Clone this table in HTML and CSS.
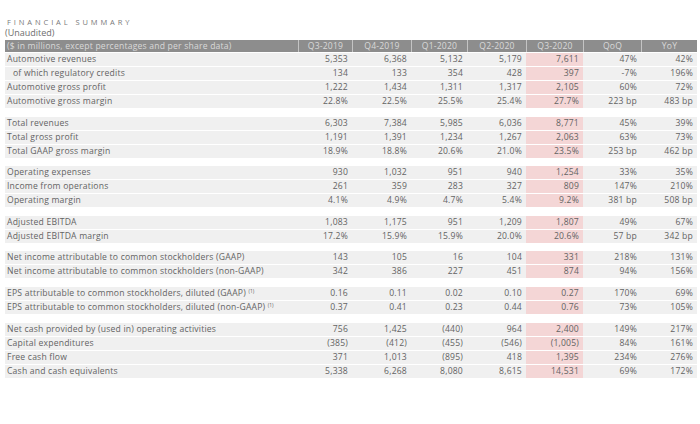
FILE: index.html
```html
<!DOCTYPE html>
<html>
<head>
<meta charset="utf-8">
<link rel="stylesheet" href="styles.css">
</head>
<body>
<div class="page">
  <div class="title">FINANCIAL SUMMARY</div>
  <div class="subtitle">(Unaudited)</div>
  <div class="table">
    <div class="row head">
      <div class="c lab">($ in millions, except percentages and per share data)</div>
      <div class="c">Q3-2019</div><div class="c">Q4-2019</div><div class="c">Q1-2020</div><div class="c">Q2-2020</div><div class="c">Q3-2020</div><div class="c">QoQ</div><div class="c">YoY</div>
    </div>
    <div class="group first">
      <div class="row"><div class="c lab">Automotive revenues</div><div class="c">5,353</div><div class="c">6,368</div><div class="c">5,132</div><div class="c">5,179</div><div class="c hl">7,611</div><div class="c">47%</div><div class="c">42%</div></div>
      <div class="row"><div class="c lab ind">of which regulatory credits</div><div class="c">134</div><div class="c">133</div><div class="c">354</div><div class="c">428</div><div class="c hl">397</div><div class="c">-7%</div><div class="c">196%</div></div>
      <div class="row"><div class="c lab">Automotive gross profit</div><div class="c">1,222</div><div class="c">1,434</div><div class="c">1,311</div><div class="c">1,317</div><div class="c hl">2,105</div><div class="c">60%</div><div class="c">72%</div></div>
      <div class="row"><div class="c lab">Automotive gross margin</div><div class="c">22.8%</div><div class="c">22.5%</div><div class="c">25.5%</div><div class="c">25.4%</div><div class="c hl">27.7%</div><div class="c">223 bp</div><div class="c">483 bp</div></div>
    </div>
    <div class="group">
      <div class="row"><div class="c lab">Total revenues</div><div class="c">6,303</div><div class="c">7,384</div><div class="c">5,985</div><div class="c">6,036</div><div class="c hl">8,771</div><div class="c">45%</div><div class="c">39%</div></div>
      <div class="row"><div class="c lab">Total gross profit</div><div class="c">1,191</div><div class="c">1,391</div><div class="c">1,234</div><div class="c">1,267</div><div class="c hl">2,063</div><div class="c">63%</div><div class="c">73%</div></div>
      <div class="row"><div class="c lab">Total GAAP gross margin</div><div class="c">18.9%</div><div class="c">18.8%</div><div class="c">20.6%</div><div class="c">21.0%</div><div class="c hl">23.5%</div><div class="c">253 bp</div><div class="c">462 bp</div></div>
    </div>
    <div class="group tight">
      <div class="row"><div class="c lab">Operating expenses</div><div class="c">930</div><div class="c">1,032</div><div class="c">951</div><div class="c">940</div><div class="c hl">1,254</div><div class="c">33%</div><div class="c">35%</div></div>
      <div class="row"><div class="c lab">Income from operations</div><div class="c">261</div><div class="c">359</div><div class="c">283</div><div class="c">327</div><div class="c hl">809</div><div class="c">147%</div><div class="c">210%</div></div>
      <div class="row"><div class="c lab">Operating margin</div><div class="c">4.1%</div><div class="c">4.9%</div><div class="c">4.7%</div><div class="c">5.4%</div><div class="c hl">9.2%</div><div class="c">381 bp</div><div class="c">508 bp</div></div>
    </div>
    <div class="group">
      <div class="row"><div class="c lab">Adjusted EBITDA</div><div class="c">1,083</div><div class="c">1,175</div><div class="c">951</div><div class="c">1,209</div><div class="c hl">1,807</div><div class="c">49%</div><div class="c">67%</div></div>
      <div class="row"><div class="c lab">Adjusted EBITDA margin</div><div class="c">17.2%</div><div class="c">15.9%</div><div class="c">15.9%</div><div class="c">20.0%</div><div class="c hl">20.6%</div><div class="c">57 bp</div><div class="c">342 bp</div></div>
    </div>
    <div class="group tight">
      <div class="row"><div class="c lab">Net income attributable to common stockholders (GAAP)</div><div class="c">143</div><div class="c">105</div><div class="c">16</div><div class="c">104</div><div class="c hl">331</div><div class="c">218%</div><div class="c">131%</div></div>
      <div class="row"><div class="c lab">Net income attributable to common stockholders (non-GAAP)</div><div class="c">342</div><div class="c">386</div><div class="c">227</div><div class="c">451</div><div class="c hl">874</div><div class="c">94%</div><div class="c">156%</div></div>
    </div>
    <div class="group">
      <div class="row"><div class="c lab">EPS attributable to common stockholders, diluted (GAAP) <sup>(1)</sup></div><div class="c">0.16</div><div class="c">0.11</div><div class="c">0.02</div><div class="c">0.10</div><div class="c hl">0.27</div><div class="c">170%</div><div class="c">69%</div></div>
      <div class="row"><div class="c lab">EPS attributable to common stockholders, diluted (non-GAAP) <sup>(1)</sup></div><div class="c">0.37</div><div class="c">0.41</div><div class="c">0.23</div><div class="c">0.44</div><div class="c hl">0.76</div><div class="c">73%</div><div class="c">105%</div></div>
    </div>
    <div class="group">
      <div class="row"><div class="c lab">Net cash provided by (used in) operating activities</div><div class="c">756</div><div class="c">1,425</div><div class="c">(440)</div><div class="c">964</div><div class="c hl">2,400</div><div class="c">149%</div><div class="c">217%</div></div>
      <div class="row"><div class="c lab">Capital expenditures</div><div class="c">(385)</div><div class="c">(412)</div><div class="c">(455)</div><div class="c">(546)</div><div class="c hl">(1,005)</div><div class="c">84%</div><div class="c">161%</div></div>
      <div class="row"><div class="c lab">Free cash flow</div><div class="c">371</div><div class="c">1,013</div><div class="c">(895)</div><div class="c">418</div><div class="c hl">1,395</div><div class="c">234%</div><div class="c">276%</div></div>
      <div class="row"><div class="c lab">Cash and cash equivalents</div><div class="c">5,338</div><div class="c">6,268</div><div class="c">8,080</div><div class="c">8,615</div><div class="c hl">14,531</div><div class="c">69%</div><div class="c">172%</div></div>
    </div>
  </div>
</div>
</body>
</html>
```
FILE: styles.css
```css
html, body {
  margin: 0;
  padding: 0;
  background: #ffffff;
}
.page {
  padding: 17px 3px 0 5px;
  font-family: "Open Sans", "Liberation Sans", sans-serif;
  color: #636363;
}
.title {
  font-size: 7.5px;
  letter-spacing: 2.9px;
  line-height: 10px;
  color: #7a7a7a;
  padding-left: 2px;
}
.subtitle {
  font-size: 9px;
  line-height: 12px;
  color: #6e6e6e;
  margin-bottom: 1px;
}
.table {
  width: 692px;
}
.row {
  display: grid;
  grid-template-columns: 293px 54px 59px 56px 59px 57px 58px 56px;
  height: 13px;
  border-bottom: 1px solid #ffffff;
  background: #f0f0f0;
  font-size: 8.6px;
  letter-spacing: 0.2px;
  line-height: 13px;
}
.c {
  text-align: right;
  padding-right: 4px;
  white-space: nowrap;
}
.c.lab {
  text-align: left;
  padding-left: 2px;
}
.c.ind {
  padding-left: 8px;
}
.c.hl {
  background: #f4d6d6;
}
.head {
  height: 12px;
  line-height: 12px;
  background: #8d8d8d;
  color: #d9d9d9;
  border-bottom: 0;
  margin-bottom: 1px;
}
.head .c {
  text-align: center;
  padding-right: 0;
  border-left: 1px solid #c4c4c4;
}
.head .c.lab {
  text-align: left;
  border-left: 0;
}
.group {
  margin-top: 8px;
}
.group.first {
  margin-top: 0;
}
.group.tight {
  margin-top: 7px;
}
sup {
  font-size: 5px;
  letter-spacing: 0;
  line-height: 0;
  vertical-align: 3px;
}
```
